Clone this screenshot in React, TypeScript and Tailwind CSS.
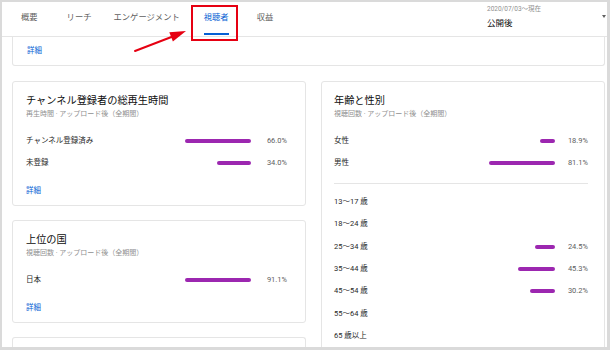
import React from 'react'

const FONT = 'font-[Roboto,"Noto_Sans_CJK_JP",sans-serif]'

const TABS = [
  { label: '概要', className: 'ml-[19px]' },
  { label: 'リーチ', className: 'ml-[29px]' },
  { label: 'エンゲージメント', className: 'ml-[22px]' },
  { label: '視聴者', className: 'ml-[24px]', active: true },
  { label: '収益', className: 'ml-[28px]' },
]

type Row = { label: string; value?: number }

function scaleWidth(value: number, max: number) {
  return `${Math.round((value / max) * 66)}px`
}

function BarRow({ row, max, pctWidth = 'w-[36px]', height = 'h-[22px]' }: { row: Row; max: number; pctWidth?: string; height?: string }) {
  return (
    <div className={`flex items-center ${height}`}>
      <span className="flex-1 text-[7.5px] leading-[10px] text-[#282828]">{row.label}</span>
      {row.value !== undefined && (
        <>
          <div className="flex w-[66px] justify-end">
            <div className="h-[4px] rounded-full bg-[#9c27b0]" style={{ width: scaleWidth(row.value, max) }} />
          </div>
          <span className={`${pctWidth} text-right text-[7.5px] leading-[10px] text-[#606060]`}>{row.value.toFixed(1)}%</span>
        </>
      )}
    </div>
  )
}

function CardHeader({ title, subtitle }: { title: string; subtitle: string }) {
  return (
    <div>
      <h2 className="text-[10.2px] leading-[14px] text-[#0d0d0d]">{title}</h2>
      <p className="mt-[1px] text-[7px] leading-[10px] text-[#909090]">{subtitle}</p>
    </div>
  )
}

function MoreLink() {
  return <p className="mt-[12px] text-[7.5px] leading-[10px] text-[#065fd4]">詳細</p>
}

export default function App() {
  const subscribers: Row[] = [
    { label: 'チャンネル登録済み', value: 66.0 },
    { label: '未登録', value: 34.0 },
  ]
  const gender: Row[] = [
    { label: '女性', value: 18.9 },
    { label: '男性', value: 81.1 },
  ]
  const ages: Row[] = [
    { label: '13～17 歳' },
    { label: '18～24 歳' },
    { label: '25～34 歳', value: 24.5 },
    { label: '35～44 歳', value: 45.3 },
    { label: '45～54 歳', value: 30.2 },
    { label: '55～64 歳' },
    { label: '65 歳以上' },
  ]

  return (
    <div className={`relative h-[350px] w-[610px] overflow-hidden ${FONT}`}>
      <div className="h-full w-full overflow-hidden border-t-2 border-l-2 border-r-[3px] border-b-[3px] border-[#dadada] bg-white">
        <header className="flex h-[35px] items-stretch justify-between border-b border-[#e5e5e5]">
          <nav className="flex items-stretch">
            {TABS.map((tab) => (
              <div key={tab.label} className={`relative flex items-center pb-[4px] text-[8.3px] ${tab.className} ${tab.active ? 'text-[#065fd4]' : 'text-[#606060]'}`}>
                {tab.label}
                {tab.active && <div className="absolute right-0 bottom-[1px] left-0 h-[2px] bg-[#065fd4]" />}
              </div>
            ))}
          </nav>
          <div className="relative flex w-[120px] flex-col pt-[3px]">
            <span className="text-[6.5px] leading-[9px] text-[#909090]">2020/07/03～現在</span>
            <span className="mt-[3px] text-[8.5px] leading-[12px] text-[#0d0d0d]">公開後</span>
            <div className="absolute top-[13px] right-[1px] h-0 w-0 border-x-[2.5px] border-t-[3px] border-x-transparent border-t-[#606060]" />
          </div>
        </header>

        <main className="pr-[2px] pl-[10px]">
          <div className="h-[29px] rounded-b-[3px] border-x border-b border-[#e5e5e5] px-[14px] pt-[9px]">
            <p className="text-[7.5px] leading-[10px] text-[#065fd4]">詳細</p>
          </div>

          <div className="mt-[15px] flex items-start gap-[15px]">
            <div className="flex w-[294px] flex-col gap-[14px]">
              <section className="rounded-[3px] border border-[#e5e5e5] pt-[12px] pr-[18px] pb-[9px] pl-[13px]">
                <CardHeader title="チャンネル登録者の総再生時間" subtitle="再生時間 · アップロード後（全期間）" />
                <div className="mt-[11px]">
                  {subscribers.map((row) => (
                    <BarRow key={row.label} row={row} max={66.0} />
                  ))}
                </div>
                <MoreLink />
              </section>

              <section className="rounded-[3px] border border-[#e5e5e5] pt-[12px] pr-[18px] pb-[9px] pl-[13px]">
                <CardHeader title="上位の国" subtitle="視聴回数 · アップロード後（全期間）" />
                <div className="mt-[11px]">
                  <BarRow row={{ label: '日本', value: 91.1 }} max={91.1} />
                </div>
                <MoreLink />
              </section>

              <section className="h-[40px] rounded-t-[3px] border-x border-t border-[#e5e5e5]" />
            </div>

            <section className="h-[300px] flex-1 rounded-[3px] border border-[#e5e5e5] pt-[12px] pr-[16px] pl-[12px]">
              <CardHeader title="年齢と性別" subtitle="視聴回数 · アップロード後（全期間）" />
              <div className="mt-[11px]">
                {gender.map((row) => (
                  <BarRow key={row.label} row={row} max={81.1} pctWidth="w-[33px]" />
                ))}
              </div>
              <div className="mt-[9px] border-t border-[#e5e5e5]" />
              <div className="mt-[7px]">
                {ages.map((row) => (
                  <BarRow key={row.label} row={row} max={81.1} pctWidth="w-[33px]" height="h-[22.33px]" />
                ))}
              </div>
            </section>
          </div>
        </main>
      </div>

      {/* annotation: red box + arrow on the 視聴者 tab */}
      <div className="pointer-events-none absolute top-[5px] left-[191px] h-[36px] w-[47px] border-2 border-[#e60012]" />
      <svg className="pointer-events-none absolute top-0 left-0" width="610" height="350" viewBox="0 0 610 350">
        <line x1="135" y1="51" x2="174" y2="36" stroke="#e60012" strokeWidth="2" strokeLinecap="round" />
        <polygon points="186,31 169.3,32.2 172.9,41.5" fill="#e60012" />
      </svg>
    </div>
  )
}
